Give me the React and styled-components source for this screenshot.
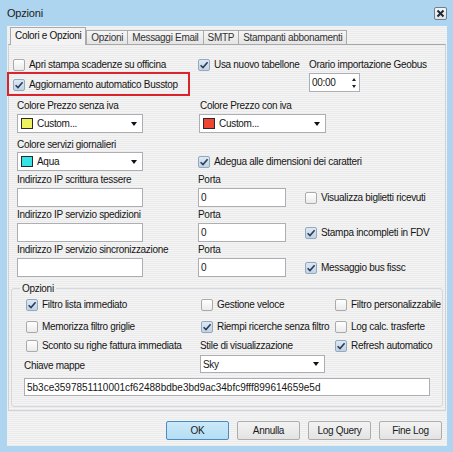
import styled, { createGlobalStyle, css } from "styled-components";

const GlobalStyle = createGlobalStyle`
  html, body {
    margin: 0;
    padding: 0;
    background: #add5ef;
  }
  body {
    font-family: "Liberation Sans", Arial, sans-serif;
    font-size: 10px;
    letter-spacing: -0.3px;
    color: #151515;
  }
`;

const Window = styled.div`
  width: 453px;
  height: 452px;
  position: relative;
  background: #add5ef;
  display: flex;
  flex-direction: column;
  overflow: hidden;
`;

const TitleBar = styled.div`
  height: 26px;
  flex: none;
  display: flex;
  align-items: center;
  padding-left: 7px;
`;

const Title = styled.span`
  font-size: 11px;
  letter-spacing: -0.2px;
  color: #1c1c1c;
`;

const CloseBox = styled.div`
  margin-left: auto;
  margin-right: 6px;
  width: 13px;
  height: 13px;
  box-sizing: border-box;
  border: 1px solid #6f7f8f;
  border-radius: 2px;
  background: linear-gradient(#f4f6f8, #dfe4e9);
  display: flex;
  align-items: center;
  justify-content: center;
`;

const Client = styled.div`
  flex: 1;
  margin: 0 6px 6px 7px;
  display: flex;
  flex-direction: column;
  background: repeating-linear-gradient(to bottom, #f4f4f4 0px, #f4f4f4 1px, #ebebeb 1px, #ebebeb 2px);
`;

const TabStrip = styled.div`
  height: 18px;
  flex: none;
  display: flex;
  align-items: flex-end;
  padding-left: 3px;
  position: relative;
  z-index: 1;
`;

const Tab = styled.div`
  height: 14px;
  box-sizing: border-box;
  padding: 0 4px;
  border: 1px solid #aaaaaa;
  border-bottom: none;
  margin-left: -1px;
  line-height: 13px;
  color: #333;
  background: linear-gradient(#f6f6f6, #e4e4e4);
  white-space: nowrap;
  ${(p) => p.$active && css`
    height: 18px;
    margin-bottom: -1px;
    margin-left: 0;
    margin-right: 1px;
    line-height: 15px;
    color: #111;
    background: #f3f3f3;
    position: relative;
    z-index: 2;
  `}
`;

const TabPage = styled.div`
  height: 367px;
  box-sizing: border-box;
  margin: 0 1px;
  border: 1px solid #d2d2d2;
  border-top-color: #a9a9a9;
  padding: 11px 0 0 4px;
  display: flex;
  flex-direction: column;
`;

const Row = styled.div`
  display: flex;
  flex: none;
  align-items: ${(p) => p.$align || "center"};
  height: ${(p) => p.$h}px;
  margin-top: ${(p) => p.$mt || 0}px;
`;

const Cell = styled.div`
  flex: none;
  width: ${(p) => (p.$w ? `${p.$w}px` : "auto")};
  padding-left: ${(p) => p.$pl || 0}px;
  padding-top: ${(p) => p.$pt || 0}px;
  display: flex;
  align-items: inherit;
  height: 100%;
  box-sizing: border-box;
`;

const Label = styled.span`
  margin-left: ${(p) => p.$ml || 0}px;
  line-height: 14px;
  white-space: nowrap;
`;

const CheckLabel = styled.label`
  display: flex;
  align-items: center;
  gap: 4px;
  white-space: nowrap;
  line-height: 14px;
`;

const Box = styled.span`
  width: 12px;
  height: 12px;
  box-sizing: border-box;
  border-radius: 2px;
  border: 1px solid #aaaaaa;
  background: linear-gradient(#ffffff, #ebebeb);
  display: flex;
  align-items: center;
  justify-content: center;
  flex: none;
  ${(p) => p.$checked && css`
    border-color: #93a9bf;
    background: linear-gradient(#dde8f3, #c3d3e3);
  `}
`;

const Field = styled.div`
  width: ${(p) => p.$w}px;
  height: ${(p) => p.$h || 19}px;
  margin-left: ${(p) => p.$ml || 0}px;
  box-sizing: border-box;
  border: 1px solid #acaeb4;
  background: #ffffff;
  display: flex;
  align-items: center;
  padding-left: ${(p) => p.$pad || 2}px;
  position: relative;
  flex: none;
  white-space: nowrap;
  letter-spacing: ${(p) => (p.$ls === undefined ? "-0.3px" : `${p.$ls}px`)};
`;

const Swatch = styled.span`
  width: 12px;
  height: 11px;
  box-sizing: border-box;
  border: 1px solid #2a2a2a;
  background: ${(p) => p.$color};
  margin-right: 4px;
  flex: none;
`;

const DropArrow = styled.span`
  margin-left: auto;
  margin-right: 5px;
  width: 0;
  height: 0;
  border-left: 3.5px solid transparent;
  border-right: 3.5px solid transparent;
  border-top: 4px solid #111;
`;

const SpinArrows = styled.span`
  margin-left: auto;
  margin-right: 3px;
  display: flex;
  flex-direction: column;
  gap: 4px;
`;

const Tri = styled.span`
  width: 0;
  height: 0;
  border-left: 2.5px solid transparent;
  border-right: 2.5px solid transparent;
  ${(p) => (p.$up ? css`border-bottom: 3px solid #222;` : css`border-top: 3px solid #222;`)}
`;

const Group = styled.fieldset`
  width: 432px;
  box-sizing: border-box;
  margin: 5px 0 0 -2px;
  padding: 2px 10px 10px 14px;
  border: 1px solid #d3d9de;
  border-radius: 3px;
  min-width: 0;
`;

const Legend = styled.legend`
  padding: 0 2px;
  margin-left: -6px;
  line-height: 13px;
`;

const ButtonBar = styled.div`
  display: flex;
  justify-content: flex-end;
  gap: 8px;
  padding-right: 5px;
  margin-top: 10px;
`;

const Button = styled.div`
  width: 63px;
  height: 19px;
  box-sizing: border-box;
  border: 1px solid #adadad;
  border-radius: 2px;
  background: linear-gradient(#f3f3f3, #e3e3e3);
  display: flex;
  align-items: center;
  justify-content: center;
  color: #1a1a1a;
  ${(p) => p.$primary && css`
    border-color: #4a8cc2;
    background: linear-gradient(#cbe9f9, #b4ddf4);
  `}
`;

const Highlight = styled.div`
  position: absolute;
  left: 7px;
  top: 72px;
  width: 183px;
  height: 24px;
  box-sizing: border-box;
  border: 2px solid #d9242c;
  pointer-events: none;
`;

function Check({ checked, children }) {
  return (
    <CheckLabel>
      <Box $checked={checked}>
        {checked && (
          <svg width="10" height="10" viewBox="0 0 10 10">
            <path d="M1.6 5.2 L4 7.6 L8.6 2.2" fill="none" stroke="#2b3d5c" strokeWidth="1.6" />
          </svg>
        )}
      </Box>
      <span>{children}</span>
    </CheckLabel>
  );
}

function ColorCombo({ color, text, w, ml }) {
  return (
    <Field $w={w} $ml={ml} $pad={3}>
      <Swatch $color={color} />
      <span>{text}</span>
      <DropArrow />
    </Field>
  );
}

export default function App() {
  return (
    <>
      <GlobalStyle />
      <Window>
        <TitleBar>
          <Title>Opzioni</Title>
          <CloseBox>
            <svg width="9" height="9" viewBox="0 0 9 9">
              <path d="M1.5 1.5 L7.5 7.5 M7.5 1.5 L1.5 7.5" stroke="#1e2a36" strokeWidth="2" />
            </svg>
          </CloseBox>
        </TitleBar>
        <Client>
          <TabStrip>
            <Tab $active>Colori e Opzioni</Tab>
            <Tab>Opzioni</Tab>
            <Tab>Messaggi Email</Tab>
            <Tab>SMTP</Tab>
            <Tab>Stampanti abbonamenti</Tab>
          </TabStrip>
          <TabPage>
            <Row $h={16} $mt={1}>
              <Cell $w={185}><Check>Apri stampa scadenze su officina</Check></Cell>
              <Cell $w={107}><Check checked>Usa nuovo tabellone</Check></Cell>
              <Cell><Label $ml={4}>Orario importazione Geobus</Label></Cell>
            </Row>
            <Row $h={23} $align="flex-start">
              <Cell $w={185} $pt={5}><Check checked>Aggiornamento automatico Busstop</Check></Cell>
              <Cell $w={107} />
              <Cell>
                <Field $w={51} $ml={4}>
                  <span>00:00</span>
                  <SpinArrows><Tri $up /><Tri /></SpinArrows>
                </Field>
              </Cell>
            </Row>
            <Row $h={14} $mt={3}>
              <Cell $w={185}><Label $ml={4}>Colore Prezzo senza iva</Label></Cell>
              <Cell><Label $ml={2}>Colore Prezzo con iva</Label></Cell>
            </Row>
            <Row $h={19} $mt={1}>
              <Cell $w={185}><ColorCombo color="#eef25e" text="Custom..." w={126} ml={4} /></Cell>
              <Cell><ColorCombo color="#ef4634" text="Custom..." w={127} ml={1} /></Cell>
            </Row>
            <Row $h={14} $mt={5}>
              <Cell $w={185}><Label $ml={4}>Colore servizi giornalieri</Label></Cell>
            </Row>
            <Row $h={19}>
              <Cell $w={185}><ColorCombo color="#36e4e6" text="Aqua" w={126} ml={4} /></Cell>
              <Cell><Check checked>Adegua alle dimensioni dei caratteri</Check></Cell>
            </Row>
            <Row $h={14} $mt={2}>
              <Cell $w={185}><Label $ml={4}>Indirizzo IP scrittura tessere</Label></Cell>
              <Cell><Label>Porta</Label></Cell>
            </Row>
            <Row $h={19} $mt={1}>
              <Cell $w={185}><Field $w={126} $ml={4} /></Cell>
              <Cell $w={107}><Field $w={88}>0</Field></Cell>
              <Cell><Check>Visualizza biglietti ricevuti</Check></Cell>
            </Row>
            <Row $h={14} $mt={1}>
              <Cell $w={185}><Label $ml={4}>Indirizzo IP servizio spedizioni</Label></Cell>
              <Cell><Label>Porta</Label></Cell>
            </Row>
            <Row $h={19} $mt={1}>
              <Cell $w={185}><Field $w={126} $ml={4} /></Cell>
              <Cell $w={107}><Field $w={88}>0</Field></Cell>
              <Cell><Check checked>Stampa incompleti in FDV</Check></Cell>
            </Row>
            <Row $h={14} $mt={1}>
              <Cell $w={185}><Label $ml={4}>Indirizzo IP servizio sincronizzazione</Label></Cell>
              <Cell><Label>Porta</Label></Cell>
            </Row>
            <Row $h={19} $mt={1}>
              <Cell $w={185}><Field $w={126} $ml={4} /></Cell>
              <Cell $w={107}><Field $w={88}>0</Field></Cell>
              <Cell><Check checked>Messaggio bus fissc</Check></Cell>
            </Row>

            <Group>
              <Legend>Opzioni</Legend>
              <Row $h={15}>
                <Cell $w={175}><Check checked>Filtro lista immediato</Check></Cell>
                <Cell $w={134}><Check>Gestione veloce</Check></Cell>
                <Cell><Check>Filtro personalizzabile</Check></Cell>
              </Row>
              <Row $h={15} $mt={7}>
                <Cell $w={175}><Check>Memorizza filtro griglie</Check></Cell>
                <Cell $w={134}><Check checked>Riempi ricerche senza filtro</Check></Cell>
                <Cell><Check>Log calc. trasferte</Check></Cell>
              </Row>
              <Row $h={15} $mt={4}>
                <Cell $w={175}><Check>Sconto su righe fattura immediata</Check></Cell>
                <Cell $w={134}><Label $ml={-1}>Stile di visualizzazione</Label></Cell>
                <Cell><Check checked>Refresh automatico</Check></Cell>
              </Row>
              <Row $h={18} $mt={2} $align="flex-end">
                <Cell $w={175}><Label $ml={-2}>Chiave mappe</Label></Cell>
                <Cell $w={134}>
                  <Field $w={125} $h={18} $ml={-1}>
                    <span>Sky</span>
                    <DropArrow />
                  </Field>
                </Cell>
              </Row>
              <Row $h={18} $mt={5}>
                <Field $w={406} $h={18} $ml={-2} $ls={0}>
                  5b3ce3597851110001cf62488bdbe3bd9ac34bfc9fff899614659e5d
                </Field>
              </Row>
            </Group>
          </TabPage>
          <ButtonBar>
            <Button $primary>OK</Button>
            <Button>Annulla</Button>
            <Button>Log Query</Button>
            <Button>Fine Log</Button>
          </ButtonBar>
        </Client>
        <Highlight />
      </Window>
    </>
  );
}
